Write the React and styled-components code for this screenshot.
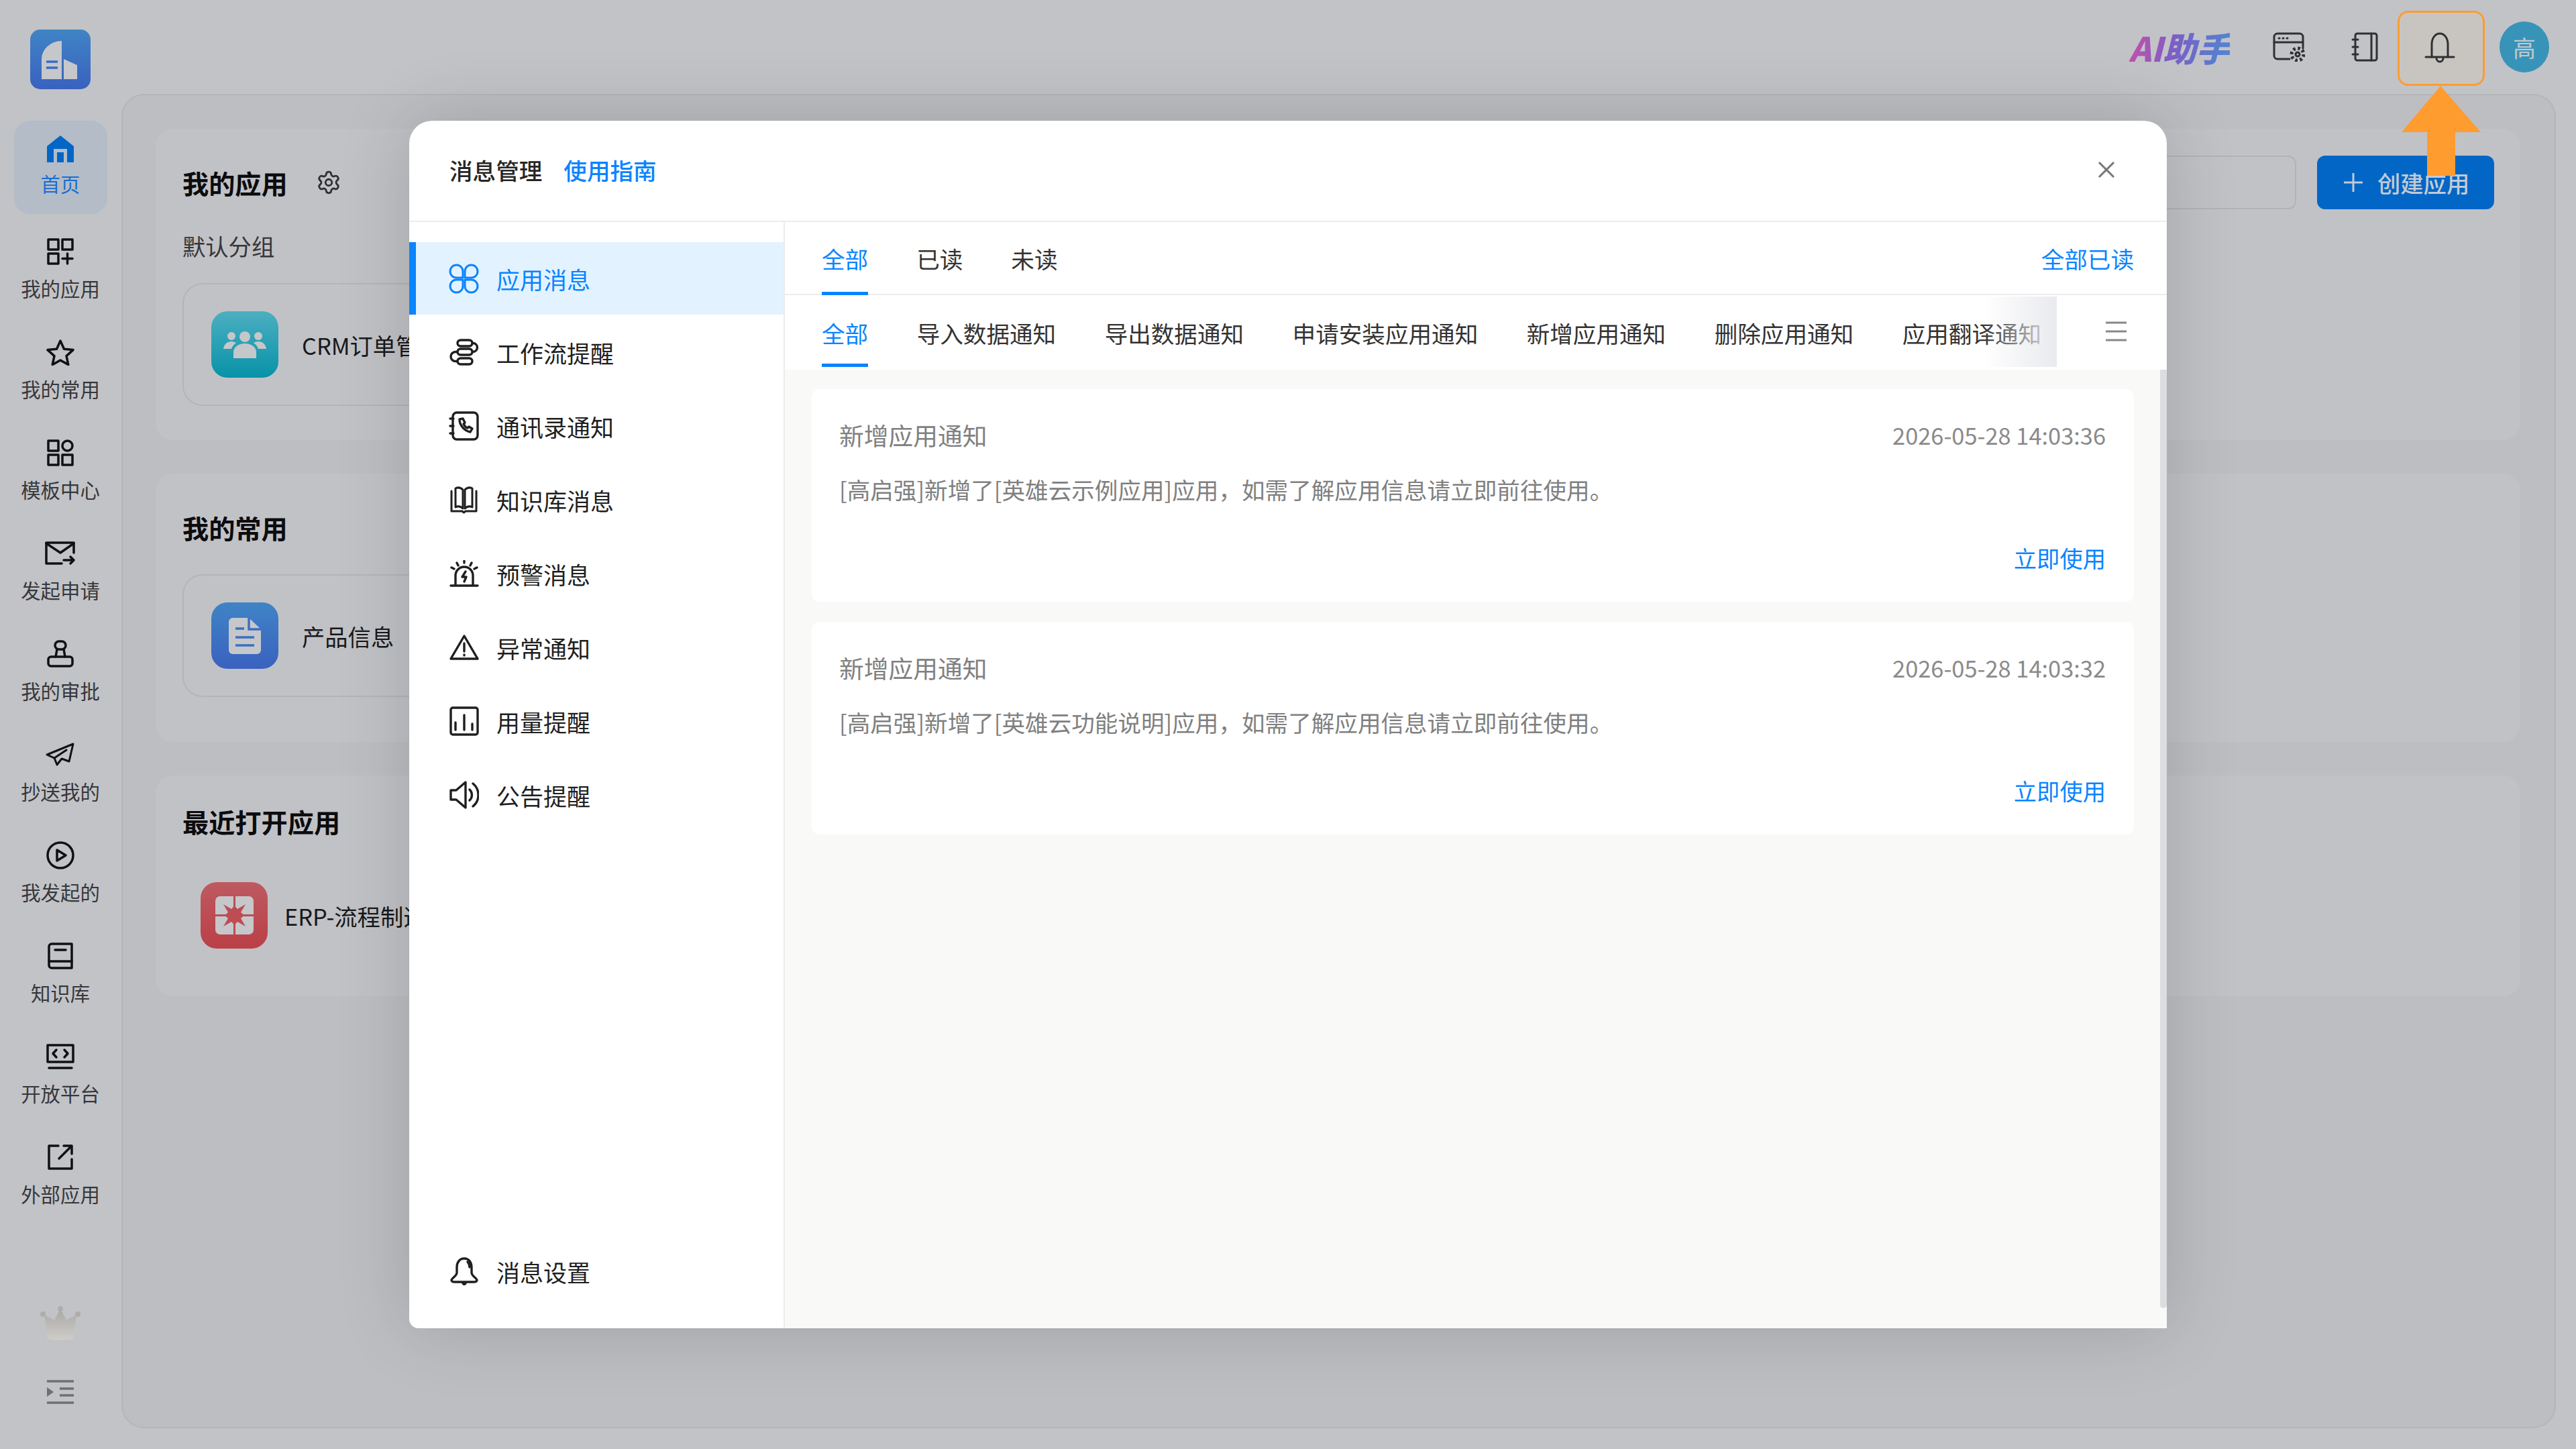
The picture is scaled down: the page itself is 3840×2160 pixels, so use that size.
import React from 'react';
import styled, { createGlobalStyle } from 'styled-components';
import { Settings } from 'lucide-react';

const GlobalStyle = createGlobalStyle`
  html, body {
    margin: 0;
    padding: 0;
    background: #c2c3c7;
  }
  body {
    font-family: "Noto Sans CJK SC", "Noto Sans", sans-serif;
    overflow: hidden;
  }
  * {
    box-sizing: border-box;
  }
`;

const Page = styled.div`
  position: relative;
  display: flex;
  width: 3840px;
  height: 2160px;
  overflow: hidden;
  background: #c2c3c7;
`;

/* ---------- sidebar ---------- */
const Sidebar = styled.aside`
  display: flex;
  flex-direction: column;
  align-items: center;
  flex: none;
  width: 181px;
  height: 100%;
  padding: 44px 1px 67px 0;
`;

const Logo = styled.div`
  display: flex;
  align-items: center;
  justify-content: center;
  width: 90px;
  height: 89px;
  margin-bottom: 47px;
  border-radius: 15px;
  background: linear-gradient(180deg, #3f84c5, #3a61bf);
`;

const NavList = styled.nav`
  display: flex;
  flex-direction: column;
  gap: 11px;
`;

const NavItem = styled.div`
  display: flex;
  flex-direction: column;
  align-items: center;
  width: 139px;
  height: 139px;
  margin-bottom: ${(p) => (p.$active ? '6px' : '0')};
  border-radius: 24px;
  background: ${(p) => (p.$active ? '#b3bcc7' : 'transparent')};
  color: ${(p) => (p.$active ? '#0266c7' : '#101114')};
`;

const NavIcon = styled.div`
  display: flex;
  align-items: center;
  justify-content: center;
  height: 78px;
  padding-top: ${(p) => (p.$active ? '6px' : '0')};
`;

const NavLabel = styled.span`
  margin-top: -3px;
  font-size: 29.4px;
  line-height: 36px;
  white-space: nowrap;
  color: ${(p) => (p.$active ? '#1a6fd0' : '#36373b')};
`;

const Crown = styled.div`
  display: flex;
  margin-top: auto;
  margin-bottom: 59px;
`;

const Collapse = styled.div`
  display: flex;
`;

/* ---------- header ---------- */
const Column = styled.div`
  display: flex;
  flex: 1;
  flex-direction: column;
  min-width: 0;
`;

const TopBar = styled.header`
  display: flex;
  flex: none;
  align-items: center;
  justify-content: flex-end;
  height: 140px;
  padding-right: 40px;
`;

const AiBrand = styled.span`
  margin-right: 64px;
  font-size: 50px;
  font-style: italic;
  font-weight: 900;
  line-height: 54px;
  white-space: nowrap;
  background: linear-gradient(100deg, #c94fa9 0%, #7a5fc6 45%, #4f86d2 100%);
  -webkit-background-clip: text;
  background-clip: text;
  color: transparent;
`;

const TopIcon = styled.div`
  display: flex;
  margin-right: ${(p) => p.$gap}px;
  color: #2f3034;
`;

const BellBox = styled.div`
  display: flex;
  align-items: center;
  justify-content: center;
  width: 130px;
  height: 112px;
  margin: 4px 22px 0 0;
  padding-right: 4px;
  border: 3px solid #ff9c2f;
  border-radius: 16px;
  background: #c8c5c1;
  color: #2f3034;
`;

const Avatar = styled.div`
  display: flex;
  align-items: center;
  justify-content: center;
  width: 74px;
  height: 76px;
  border-radius: 50%;
  background: #3893b8;
  color: #c3c8cc;
  font-size: 34px;
`;

/* ---------- background panel ---------- */
const Panel = styled.main`
  display: flex;
  flex-direction: column;
  gap: 50px;
  width: 3629px;
  height: 1989px;
  padding: 50px 51px 0 49px;
  border: 2px solid #b4b5b9;
  border-radius: 34px;
  background: #bdbec2;
`;

const Section = styled.section`
  flex: none;
  padding: ${(p) => p.$padding};
  border-radius: 26px;
  background: #c1c2c6;
`;

const SectionHead = styled.div`
  display: flex;
  align-items: center;
  height: 80px;
`;

const SectionTitle = styled.h2`
  margin: 0;
  font-size: 39.2px;
  font-weight: 700;
  line-height: 50px;
  color: #0c0c0e;
  white-space: nowrap;
`;

const GearWrap = styled.div`
  display: flex;
  margin-left: 42px;
  color: #2f3034;
`;

const HeadRight = styled.div`
  display: flex;
  align-items: center;
  gap: 31px;
  margin-left: auto;
`;

const SearchBox = styled.div`
  width: 400px;
  height: 80px;
  border: 2px solid #b2b3b7;
  border-radius: 12px;
`;

const CreateButton = styled.div`
  display: flex;
  align-items: center;
  width: 264px;
  height: 80px;
  padding-left: 40px;
  border-radius: 12px;
  background: #0266c7;
  color: #c4cad2;
  font-size: 34.3px;
  font-weight: 500;
  white-space: nowrap;
`;

const PlusMark = styled.svg`
  flex: none;
  width: 28px;
  height: 28px;
  margin-right: 22px;
`;

const GroupLabel = styled.div`
  margin-top: 36px;
  font-size: 34.3px;
  line-height: 36px;
  color: #36373b;
`;

const AppCard = styled.div`
  display: flex;
  align-items: center;
  gap: 35px;
  width: 700px;
  height: 183px;
  margin-top: ${(p) => p.$top}px;
  padding-left: 41px;
  border: 2px solid #b4b5b9;
  border-radius: 30px;
`;

const RecentApp = styled.div`
  display: flex;
  align-items: center;
  gap: 25px;
  margin-top: 66px;
  padding-left: 27px;
`;

const AppIcon = styled.div`
  display: flex;
  flex: none;
  align-items: center;
  justify-content: center;
  width: 100px;
  height: 99px;
  border-radius: 24px;
  background: ${(p) => p.$bg};
`;

const AppName = styled.span`
  font-size: 34.3px;
  color: #17181b;
  white-space: nowrap;
`;

/* ---------- arrow ---------- */
const Arrow = styled.svg`
  position: absolute;
  top: 128px;
  left: 3580px;
  z-index: 3;
`;

/* ---------- modal ---------- */
const Modal = styled.div`
  position: absolute;
  top: 180px;
  left: 610px;
  z-index: 2;
  display: flex;
  flex-direction: column;
  width: 2620px;
  height: 1800px;
  overflow: hidden;
  border-radius: 34px 34px 0 14px;
  background: #fff;
  box-shadow: 0 0 110px rgba(0, 0, 0, 0.16);
`;

const ModalHead = styled.div`
  display: flex;
  flex: none;
  align-items: center;
  justify-content: space-between;
  height: 151px;
  padding: 0 77px 4px 60px;
  border-bottom: 2px solid #ececec;
`;

const ModalTitle = styled.div`
  display: flex;
  gap: 32px;
  font-size: 34.6px;
  font-weight: 500;
  color: #262626;
`;

const GuideLink = styled.span`
  color: #0a84ff;
`;

const CloseMark = styled.svg`
  display: block;
  width: 26px;
  height: 26px;
`;

const ModalBody = styled.div`
  display: flex;
  flex: 1;
  min-height: 0;
`;

const MsgNav = styled.div`
  display: flex;
  flex: none;
  flex-direction: column;
  gap: 2px;
  width: 560px;
  padding: 30px 0 31px;
  border-right: 2px solid #ececec;
`;

const MsgNavItem = styled.div`
  display: flex;
  flex: none;
  align-items: center;
  gap: 26px;
  height: 108px;
  margin-top: ${(p) => (p.$bottom ? 'auto' : '0')};
  padding-left: 59px;
  background: ${(p) => (p.$active ? '#e3f2ff' : 'transparent')};
  box-shadow: ${(p) => (p.$active ? 'inset 10px 0 0 #0a84ff' : 'none')};
  color: ${(p) => (p.$active ? '#0a84ff' : '#1f1f1f')};
  font-size: 35px;
`;

const MsgIconBox = styled.span`
  display: flex;
  flex: none;
  justify-content: center;
  width: 45px;
`;

const MsgMain = styled.div`
  display: flex;
  flex: 1;
  flex-direction: column;
  min-width: 0;
`;

const ReadTabs = styled.div`
  display: flex;
  flex: none;
  justify-content: space-between;
  height: 109px;
  padding: 0 49px 0 55px;
  border-bottom: 2px solid #ececec;
`;

const TabGroup = styled.div`
  display: flex;
  gap: 72px;
`;

const Tab = styled.div`
  height: ${(p) => p.$height}px;
  padding-top: ${(p) => p.$top}px;
  border-bottom: 5px solid ${(p) => (p.$active ? '#0a84ff' : 'transparent')};
  color: ${(p) => (p.$active ? '#0a84ff' : '#333')};
  font-size: 34.6px;
  line-height: 40px;
  white-space: nowrap;
`;

const ReadAll = styled.div`
  padding-top: 34px;
  color: #0a84ff;
  font-size: 34.6px;
  line-height: 40px;
`;

const TypeBar = styled.div`
  display: flex;
  flex: none;
  height: 111px;
`;

const TypeScroller = styled.div`
  position: relative;
  display: flex;
  flex: none;
  gap: 72.5px;
  width: 1896px;
  height: 107px;
  padding-left: 55px;
  overflow: hidden;

  &::after {
    content: "";
    position: absolute;
    top: 2px;
    right: 0;
    bottom: 0;
    width: 110px;
    background: linear-gradient(90deg, rgba(233, 234, 238, 0), #e9eaee);
  }
`;

const MoreMark = styled.svg`
  flex: none;
  width: 31px;
  height: 30px;
  margin: 39px 0 0 73px;
`;

const MsgList = styled.div`
  position: relative;
  display: flex;
  flex: 1;
  flex-direction: column;
  gap: 30px;
  min-height: 0;
  padding: 29px 49px 0 40px;
  background: #f9f9f7;
`;

const ScrollThumb = styled.div`
  position: absolute;
  top: 0;
  right: 0;
  width: 10px;
  height: 1399px;
  border-radius: 0 0 5px 5px;
  background: #dcdde0;
`;

const MsgCard = styled.article`
  flex: none;
  height: 317px;
  padding: 43px 42px 0 41px;
  border-radius: 12px;
  background: #fff;
`;

const MsgHead = styled.div`
  display: flex;
  align-items: center;
  justify-content: space-between;
  height: 50px;
`;

const MsgTitle = styled.span`
  color: #808080;
  font-size: 36.75px;
`;

const MsgTime = styled.span`
  color: #8a8a8a;
  font-size: 34.4px;
`;

const MsgText = styled.p`
  margin: 36px 0 0;
  color: #808080;
  font-size: 34.6px;
  line-height: 40px;
`;

const MsgAction = styled.div`
  margin-top: 62px;
  color: #0a84ff;
  font-size: 34.3px;
  line-height: 40px;
  text-align: right;
`;

/* ---------- icons ---------- */
const Line = styled.svg`
  display: block;
  fill: none;
  stroke: currentColor;
  stroke-width: ${(p) => p.$w || 3.5};
  stroke-linecap: round;
  stroke-linejoin: round;
`;

const Icon = ({ w, h, sw, children }) => (
  <Line width={w} height={h} viewBox={`0 0 ${w} ${h}`} $w={sw}>
    {children}
  </Line>
);

const sideIcons = {
  home: (
    <svg width="40" height="40" viewBox="0 0 40 40">
      <path d="M20 0 40 16V40H0V16Z" fill="#0266c7" />
      <rect x="10" y="20" width="20" height="20" fill="#b3bcc7" />
      <rect x="15" y="25" width="10" height="15" fill="#0266c7" />
    </svg>
  ),
  apps: (
    <Icon w={40} h={40}>
      <rect x="2" y="2" width="15" height="15" />
      <rect x="23" y="2" width="15" height="15" />
      <rect x="2" y="23" width="15" height="15" />
      <path d="M30.5 23v15M23 30.5h15" />
    </Icon>
  ),
  star: (
    <Icon w={42} h={40}>
      <path d="M21 3l5.5 12.2 13.5 1.4-10 9 2.8 13-11.8-6.6-11.8 6.6 2.8-13-10-9 13.500-1.400z" />
    </Icon>
  ),
  template: (
    <Icon w={40} h={40}>
      <rect x="2" y="2" width="15" height="15" />
      <circle cx="30.500" cy="9.500" r="7.500" />
      <rect x="2" y="23" width="15" height="15" />
      <rect x="23" y="23" width="15" height="15" />
    </Icon>
  ),
  mail: (
    <Icon w={46} h={36}>
      <path d="M43 17V2H2v31h23" />
      <path d="M2 3l21 14L43 3" />
      <path d="M28 28h15M38 23l5 5-5 5" />
    </Icon>
  ),
  stamp: (
    <Icon w={42} h={42}>
      <rect x="13" y="2" width="16" height="12" rx="6" />
      <path d="M16 14l-2 11M26 14l2 11" />
      <rect x="3" y="25" width="36" height="14" rx="4" />
    </Icon>
  ),
  plane: (
    <Icon w={44} h={36} sw={3}>
      <path d="M2 18 41 2l-6 26-11-4-7 9-4-10z" />
      <path d="M13 23 31 11" />
    </Icon>
  ),
  play: (
    <Icon w={44} h={42}>
      <circle cx="22" cy="21" r="19" />
      <path d="M17 13l13 8-13 8z" />
    </Icon>
  ),
  book: (
    <Icon w={40} h={42}>
      <path d="M3 32V7a4 4 0 0 1 4-4h30v36H7a4 4 0 0 1-4-4z" />
      <path d="M3 29h34M12 12h16" />
    </Icon>
  ),
  code: (
    <Icon w={42} h={38}>
      <rect x="2" y="2" width="38" height="25" />
      <path d="M15 9l-5 5.500 5 5.500M27 9l5 5.500-5 5.500M4 36h34" />
    </Icon>
  ),
  external: (
    <Icon w={40} h={40}>
      <path d="M17 3H3v34h34V23" />
      <path d="M18 22 37 3M25 3h12v12" />
    </Icon>
  ),
};

const sideItems = [
  { key: 'home', label: '首页', active: true },
  { key: 'apps', label: '我的应用' },
  { key: 'star', label: '我的常用' },
  { key: 'template', label: '模板中心' },
  { key: 'mail', label: '发起申请' },
  { key: 'stamp', label: '我的审批' },
  { key: 'plane', label: '抄送我的' },
  { key: 'play', label: '我发起的' },
  { key: 'book', label: '知识库' },
  { key: 'code', label: '开放平台' },
  { key: 'external', label: '外部应用' },
];

const msgIcons = {
  app: (
    <Icon w={45} h={45} sw={3}>
      <path d="M2 11.500a9.500 9.500 0 0 1 19 0V21h-9.500A9.500 9.500 0 0 1 2 11.500z" />
      <path d="M24 11.500a9.500 9.500 0 1 1 9.500 9.500H24z" />
      <path d="M2 33.500A9.500 9.500 0 0 1 11.500 24H21v9.500a9.500 9.500 0 0 1-19 0z" />
      <path d="M24 24h9.500a9.500 9.500 0 1 1-9.500 9.500z" />
    </Icon>
  ),
  flow: (
    <Icon w={45} h={40} sw={3.400}>
      <rect x="13" y="2" width="22" height="9" rx="4.500" />
      <rect x="13" y="15" width="22" height="9" rx="4.500" />
      <rect x="13" y="29" width="22" height="9" rx="4.500" />
      <path d="M35 6.500h1a6.500 6.500 0 0 1 0 13h-1M13 19.500h-3a7 7 0 0 0 0 14h3" />
    </Icon>
  ),
  contact: (
    <Icon w={45} h={44} sw={3.400}>
      <rect x="6" y="2" width="37" height="40" rx="6" />
      <path d="M2 11h5M2 22h5M2 33h5" />
      <path d="M16 12c0 9 7 17 16 19l3-5-5-3-2 2c-3-1-5-4-6-6l2-2-3-6z" />
    </Icon>
  ),
  library: (
    <Icon w={45} h={42} sw={3}>
      <path d="M10 4c4-2 8-1 11 2v28c-3-3-7-4-11-2z" />
      <path d="M35 4c-4-2-8-1-11 2v28c3-3 7-4 11-2z" />
      <path d="M4 8v30h16l2.500 2 2.500-2h16V8" />
    </Icon>
  ),
  alarm: (
    <Icon w={44} h={40} sw={3.400}>
      <path d="M2 38h40M9 38V23a13 13 0 0 1 26 0v15" />
      <path d="M24 17l-5 8h6l-3 7" />
      <path d="M22 1v3M11 4l2 4M33 4l-2 4M3 11l4 2M41 11l-4 2" />
    </Icon>
  ),
  warn: (
    <Icon w={44} h={40} sw={3.400}>
      <path d="M22 3l20 34H2z" />
      <path d="M22 14v12M22 31v1" />
    </Icon>
  ),
  usage: (
    <Icon w={44} h={44} sw={3.400}>
      <rect x="2" y="2" width="40" height="40" rx="3" />
      <path d="M9 24v11M22 13v22M34 26v9" />
    </Icon>
  ),
  notice: (
    <Icon w={45} h={42} sw={3.400}>
      <path d="M3 14h8L25 2v38L11 28H3z" />
      <path d="M31 13a11 11 0 0 1 0 16M36 4a22 22 0 0 1 0 34" />
    </Icon>
  ),
  bell: (
    <Icon w={44} h={44} sw={3.400}>
      <path d="M22 3c-7 0-11 6-11 13v8c0 5-7 8-8 11 0 2 2 3 5 3h28c3 0 5-1 5-3-1-3-8-6-8-11v-8c0-7-4-13-11-13z" />
      <path d="M27 8c2 2 3 5 3 8M20 40c1 2 3 2 4 0" />
    </Icon>
  ),
};

const msgItems = [
  { key: 'app', label: '应用消息', active: true },
  { key: 'flow', label: '工作流提醒' },
  { key: 'contact', label: '通讯录通知' },
  { key: 'library', label: '知识库消息' },
  { key: 'alarm', label: '预警消息' },
  { key: 'warn', label: '异常通知' },
  { key: 'usage', label: '用量提醒' },
  { key: 'notice', label: '公告提醒' },
];

const typeTabs = ['全部', '导入数据通知', '导出数据通知', '申请安装应用通知', '新增应用通知', '删除应用通知', '应用翻译通知'];

const messages = [
  { time: '2026-05-28 14:03:36', app: '英雄云示例应用' },
  { time: '2026-05-28 14:03:32', app: '英雄云功能说明' },
];

function App() {
  return (
    <Page>
      <GlobalStyle />
      <Sidebar>
        <Logo>
          <svg width="90" height="89" viewBox="0 0 90 89">
            <path d="M17 74V44a30 27 0 0 1 30-27v57z" fill="#c6c7cb" />
            <path d="M50 44l20 9v21H50z" fill="#c6c7cb" />
            <path d="M24 48h17M24 57h17" stroke="#3a6cc2" strokeWidth="3.500" />
          </svg>
        </Logo>
        <NavList>
          {sideItems.map((item) => (
            <NavItem key={item.key} $active={item.active}>
              <NavIcon $active={item.active}>{sideIcons[item.key]}</NavIcon>
              <NavLabel $active={item.active}>{item.label}</NavLabel>
            </NavItem>
          ))}
        </NavList>
        <Crown>
          <svg width="60" height="51" viewBox="0 0 60 51">
            <defs>
              <linearGradient id="crownFill" x1="0" y1="0" x2="0" y2="1">
                <stop offset="0" stopColor="#a9a8a6" />
                <stop offset="1" stopColor="#cfcdc8" />
              </linearGradient>
            </defs>
            <path d="M30 4l9 17 15-8-5 36c-12 2-26 2-38 0L6 13l15 8z" fill="url(#crownFill)" />
            <circle cx="30" cy="4" r="4" fill="#aeadaa" />
            <circle cx="4" cy="12" r="4" fill="#aeadaa" />
            <circle cx="56" cy="12" r="4" fill="#aeadaa" />
          </svg>
        </Crown>
        <Collapse>
          <svg width="40" height="36" viewBox="0 0 40 36">
            <path d="M0 2h40M19 13h21M19 23h21M0 34h40" stroke="#6f7074" strokeWidth="3.500" />
            <path d="M0 11l10 7-10 7z" fill="#6f7074" />
          </svg>
        </Collapse>
      </Sidebar>

      <Column>
        <TopBar>
          <AiBrand>AI助手</AiBrand>
          <TopIcon $gap={69}>
            <Icon w={48} h={44} sw={3}>
              <path d="M45 24V7a5 5 0 0 0-5-5H7a5 5 0 0 0-5 5v28a5 5 0 0 0 5 5h18" />
              <path d="M2 15h43M9 9h1M15 9h1M21 9h1" />
              <circle cx="37" cy="33" r="9" strokeWidth="5" strokeDasharray="3.600 3.460" strokeLinecap="butt" />
              <circle cx="37" cy="33" r="3" />
            </Icon>
          </TopIcon>
          <TopIcon $gap={29}>
            <Icon w={40} h={44} sw={3}>
              <rect x="6" y="2" width="32" height="40" rx="3" />
              <path d="M30 2v40M2 11h8M2 22h8M2 33h8" />
            </Icon>
          </TopIcon>
          <BellBox>
            <Icon w={46} h={48} sw={3}>
              <path d="M11 37V18c0-9 5-16 12-16s12 7 12 16v19" />
              <path d="M2 37h42M18 39a5 5 0 0 0 10 0" />
            </Icon>
          </BellBox>
          <Avatar>高</Avatar>
        </TopBar>

        <Panel>
          <Section $padding="40px 39px 51px 40px">
            <SectionHead>
              <SectionTitle>我的应用</SectionTitle>
              <GearWrap>
                <Settings size={38} strokeWidth={1.800} />
              </GearWrap>
              <HeadRight>
                <SearchBox />
                <CreateButton>
                  <PlusMark viewBox="0 0 28 28">
                    <path d="M14 0v28M0 14h28" stroke="#c4cad2" strokeWidth="3" />
                  </PlusMark>
                  创建应用
                </CreateButton>
              </HeadRight>
            </SectionHead>
            <GroupLabel>默认分组</GroupLabel>
            <AppCard $top={38}>
              <AppIcon $bg="linear-gradient(180deg, #4cafc1, #0792a8)">
                <svg width="64" height="40" viewBox="0 0 64 40" fill="#c5c7ca">
                  <circle cx="12" cy="7" r="6" />
                  <circle cx="32" cy="8" r="8" />
                  <circle cx="52" cy="7" r="6" />
                  <path d="M0 26c1-8 7-11 12-11 3 0 5 1 7 2-4 3-6 6-7 9z" />
                  <path d="M64 26c-1-8-7-11-12-11-3 0-5 1-7 2 4 3 6 6 7 9z" />
                  <path d="M15 40V30c1-8 9-12 17-12s16 4 17 12v10z" />
                </svg>
              </AppIcon>
              <AppName>CRM订单管理</AppName>
            </AppCard>
          </Section>

          <Section $padding="55px 39px 67px 40px">
            <SectionTitle>我的常用</SectionTitle>
            <AppCard $top={45}>
              <AppIcon $bg="linear-gradient(180deg, #3f84c5, #3a61bf)">
                <svg width="48" height="54" viewBox="0 0 48 54">
                  <path d="M6 0h24l18 17v31a6 6 0 0 1-6 6H6a6 6 0 0 1-6-6V6a6 6 0 0 1 6-6z" fill="#c5c7ca" />
                  <path d="M30 0v17h18M10 16h13M10 29h28M10 41h28" fill="none" stroke="#3b6fc2" strokeWidth="3.500" />
                </svg>
              </AppIcon>
              <AppName>产品信息</AppName>
            </AppCard>
          </Section>

          <Section $padding="43px 39px 71px 40px">
            <SectionTitle>最近打开应用</SectionTitle>
            <RecentApp>
              <AppIcon $bg="linear-gradient(180deg, #bd5a60, #bb3f47)">
                <svg width="57" height="57" viewBox="0 0 57 57">
                  <rect width="57" height="57" rx="7" fill="#c5c7ca" />
                  <path d="M28.500 0v57M0 28.500h57" stroke="#bd4c53" strokeWidth="3" />
                  <path d="M12 12l12 7 4.500-5 4.500 5 12-7-7 12 5 4.500-5 4.500 7 12-12-7-4.500 5-4.500-5-12 7 7-12-5-4.500 5-4.500z" fill="#bd4c53" />
                </svg>
              </AppIcon>
              <AppName>ERP-流程制造</AppName>
            </RecentApp>
          </Section>
        </Panel>
      </Column>

      <Modal>
        <ModalHead>
          <ModalTitle>
            <span>消息管理</span>
            <GuideLink>使用指南</GuideLink>
          </ModalTitle>
          <CloseMark viewBox="0 0 26 26">
            <path d="M2 2l22 22M24 2 2 24" stroke="#777" strokeWidth="3" fill="none" />
          </CloseMark>
        </ModalHead>
        <ModalBody>
          <MsgNav>
            {msgItems.map((item) => (
              <MsgNavItem key={item.key} $active={item.active}>
                <MsgIconBox>{msgIcons[item.key]}</MsgIconBox>
                {item.label}
              </MsgNavItem>
            ))}
            <MsgNavItem $bottom>
              <MsgIconBox>{msgIcons.bell}</MsgIconBox>
              消息设置
            </MsgNavItem>
          </MsgNav>
          <MsgMain>
            <ReadTabs>
              <TabGroup>
                <Tab $active $height={109} $top={34}>全部</Tab>
                <Tab $height={109} $top={34}>已读</Tab>
                <Tab $height={109} $top={34}>未读</Tab>
              </TabGroup>
              <ReadAll>全部已读</ReadAll>
            </ReadTabs>
            <TypeBar>
              <TypeScroller>
                {typeTabs.map((name, i) => (
                  <Tab key={name} $active={i === 0} $height={107} $top={36}>{name}</Tab>
                ))}
              </TypeScroller>
              <MoreMark viewBox="0 0 31 30">
                <path d="M0 2h31M0 15h31M0 28h31" stroke="#888" strokeWidth="3" />
              </MoreMark>
            </TypeBar>
            <MsgList>
              {messages.map((msg) => (
                <MsgCard key={msg.time}>
                  <MsgHead>
                    <MsgTitle>新增应用通知</MsgTitle>
                    <MsgTime>{msg.time}</MsgTime>
                  </MsgHead>
                  <MsgText>[高启强]新增了[{msg.app}]应用，如需了解应用信息请立即前往使用。</MsgText>
                  <MsgAction>立即使用</MsgAction>
                </MsgCard>
              ))}
              <ScrollThumb />
            </MsgList>
          </MsgMain>
        </ModalBody>
      </Modal>

      <Arrow width="118" height="134" viewBox="0 0 118 134">
        <path d="M58 0l60 69H80v65H38V69H0z" fill="#ff9c2f" />
      </Arrow>
    </Page>
  );
}

export default App;
